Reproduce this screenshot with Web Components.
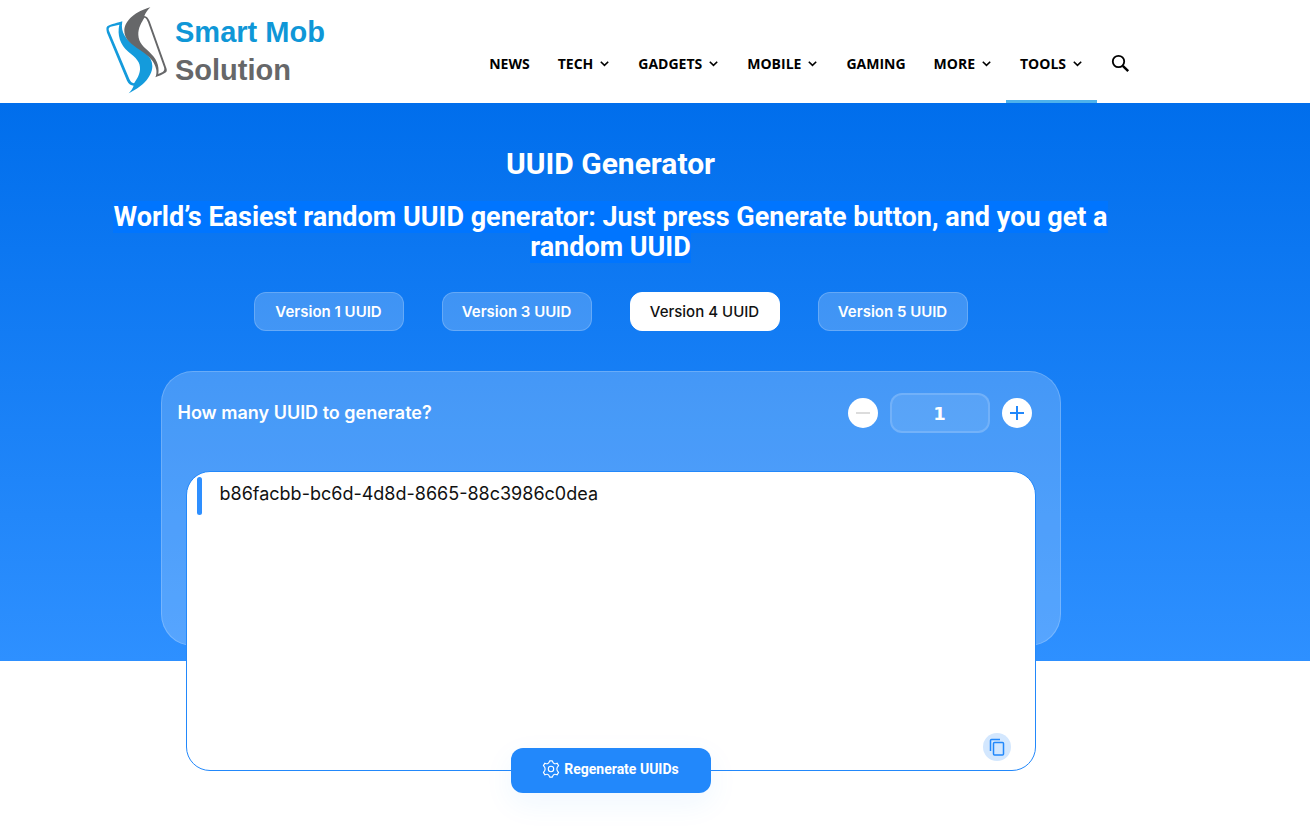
<!DOCTYPE html>
<html lang="en">
<head>
<meta charset="utf-8">
<meta name="viewport" content="width=device-width, initial-scale=1">
<title>UUID Generator - Smart Mob Solution</title>
<style>
  body {
    margin: 0;
    background-color: white;
    font-family: Roboto, sans-serif;
    --gutter-left: 102px;
    --gutter-right: 191px;
    --blue: #2288fb;
  }
</style>
</head>
<body>
<site-header>
  <site-logo slot="logo"></site-logo>
  <nav-item>News</nav-item>
  <nav-item menu>Tech</nav-item>
  <nav-item menu>Gadgets</nav-item>
  <nav-item menu>Mobile</nav-item>
  <nav-item>Gaming</nav-item>
  <nav-item menu>More</nav-item>
  <nav-item menu active>Tools</nav-item>
</site-header>
<uuid-hero>
  <span slot="title">UUID Generator</span>
  <span slot="subtitle">World’s Easiest random UUID generator: Just press Generate button, and you get a random UUID</span>
  <version-tab slot="tabs">Version 1 UUID</version-tab>
  <version-tab slot="tabs">Version 3 UUID</version-tab>
  <version-tab slot="tabs" active>Version 4 UUID</version-tab>
  <version-tab slot="tabs">Version 5 UUID</version-tab>
  <uuid-panel>b86facbb-bc6d-4d8d-8665-88c3986c0dea</uuid-panel>
</uuid-hero>

<script>
class SiteLogo extends HTMLElement {
  constructor() {
    super();
    this.attachShadow({mode: 'open'});
  }

  connectedCallback() {
    this.shadowRoot.innerHTML = `
    <style>
      :host {
        display: block;
      }

      a {
        display: flex;
        gap: 7px;
        color: #666769;
        text-decoration: none;
        font: bold 29px/38px "Liberation Sans", sans-serif;
      }

      .name {
        padding-top: 6px;
      }

      .name > span {
        display: block;
      }

      .name > span:first-child {
        color: #0f97d7;
      }
    </style>
    <a href="#">
      <svg width="62" height="87" viewBox="20 19 186 261" aria-hidden="true">
        <path fill="#149bdc" fill-rule="evenodd" d="M69 62 C58 66 34 70 24 77 C20 80 21 88 23 96 L83 240 C88 251 95 254 103 255 C100 263 95 271 88 278 C122 262 159 232 159 196 C159 167 133 151 109 136 C82 118 62 98 69 62 Z M60 72 C53 102 62 132 87 153 C110 172 124 183 122 207 C120 226 110 238 104 248 C97 247 93 242 90 235 L29 90 C27 84 28 80 34 78 Z"/>
        <path fill="#666769" fill-rule="evenodd" d="M153 20 C111 31 75 59 75 91 C75 117 97 131 122 148 C149 166 166 181 171 208 C172 216 171 224 168 230 C177 227 191 221 200 215 C203 212 203 207 201 202 L151 62 C147 52 142 47 135 46 C138 37 145 28 153 20 Z M135 51 C140 50 143 57 146 65 L194 200 C196 207 195 211 190 214 L177 220 C181 193 170 173 150 154 C133 138 118 127 117 103 C116 81 127 65 135 51 Z"/>
      </svg>
      <span class="name"><span>Smart Mob</span><span>Solution</span></span>
    </a>
    `;
  }
}

class NavItem extends HTMLElement {
  constructor() {
    super();
    this.attachShadow({mode: 'open'});
  }

  connectedCallback() {
    const arrow = this.hasAttribute('menu') ? `
      <svg width="9" height="6" viewBox="0 0 9 6" fill="none" stroke="currentColor" stroke-width="1.6" aria-hidden="true">
        <path d="M.8 .8l3.700 3.600L8.200 .8"/>
      </svg>` : '';

    this.shadowRoot.innerHTML = `
    <style>
      :host {
        display: flex;
      }

      a {
        display: flex;
        align-items: center;
        gap: 7px;
        box-sizing: border-box;
        padding: 27px 14px 0;
        border-bottom: 3px solid transparent;
        color: black;
        text-decoration: none;
        text-transform: uppercase;
        font: 700 14px/20px "Open Sans", sans-serif;
      }

      :host([menu]) a {
        padding-right: 15px;
      }

      :host([active]) a {
        border-bottom-color: #4db2ec;
      }
    </style>
    <a href="#"><slot></slot>${arrow}</a>
    `;
  }
}

class SiteHeader extends HTMLElement {
  constructor() {
    super();
    this.attachShadow({mode: 'open'});
  }

  connectedCallback() {
    this.shadowRoot.innerHTML = `
    <style>
      :host {
        display: block;
      }

      header {
        display: flex;
        justify-content: space-between;
        box-sizing: border-box;
        min-height: 103px;
        padding: 0 calc(var(--gutter-right) - 11px) 0 106px;
      }

      slot[name="logo"]::slotted(*) {
        padding-top: 7px;
      }

      nav {
        display: flex;
      }

      .search {
        align-self: center;
        margin: 23px 0 0 14px;
        padding: 0;
        border: 0;
        background: none;
        cursor: pointer;
      }

      .search svg {
        display: block;
      }
    </style>
    <header>
      <slot name="logo"></slot>
      <nav>
        <slot></slot>
        <button class="search" type="button" aria-label="Search">
          <svg width="19" height="19" viewBox="0 0 19 19" fill="none" stroke="black" aria-hidden="true">
            <circle cx="7.500" cy="7.500" r="5.700" stroke-width="1.800"/>
            <path d="M11.800 11.800l5.400 5.400" stroke-width="2.400"/>
          </svg>
        </button>
      </nav>
    </header>
    `;
  }
}

class VersionTab extends HTMLElement {
  constructor() {
    super();
    this.attachShadow({mode: 'open'});
  }

  connectedCallback() {
    this.shadowRoot.innerHTML = `
    <style>
      :host {
        display: block;
      }

      button {
        width: 150px;
        height: 39px;
        padding: 0;
        border: 1px solid rgba(255, 255, 255, 0.2);
        border-radius: 12px;
        background-color: rgba(255, 255, 255, 0.2);
        color: white;
        font: 600 15px/20px Inter, sans-serif;
        cursor: pointer;
      }

      :host([active]) button {
        border-color: white;
        background-color: white;
        color: #111;
        font-weight: 500;
      }
    </style>
    <button type="button"><slot></slot></button>
    `;
  }
}

class UuidPanel extends HTMLElement {
  constructor() {
    super();
    this.attachShadow({mode: 'open'});
  }

  connectedCallback() {
    this.render();
  }

  render() {
    this.shadowRoot.innerHTML = `
    <style>
      /* the result card hangs out of the bottom of the panel */
      :host {
        display: block;
        max-width: 900px;
        height: 275px;
        margin: 40px auto 0;
        box-sizing: border-box;
        border: 1px solid rgba(255, 255, 255, 0.2);
        border-radius: 32px;
        background-color: rgba(255, 255, 255, 0.2);
      }

      .amount {
        display: flex;
        align-items: center;
        gap: 12px;
        padding: 21px 28px 0 16px;
        color: white;
        font: 600 18px/24px Inter, sans-serif;
      }

      label {
        margin-right: auto;
      }

      .round {
        display: grid;
        place-items: center;
        width: 30px;
        height: 30px;
        padding: 0;
        border: 0;
        border-radius: 50%;
        background-color: white;
        color: var(--blue);
        cursor: pointer;
      }

      .round:disabled {
        color: #dcdcdc;
      }

      input {
        box-sizing: border-box;
        width: 100px;
        height: 40px;
        padding: 0;
        border: 2px solid rgba(255, 255, 255, 0.15);
        border-radius: 12px;
        background-color: rgba(255, 255, 255, 0.1);
        color: white;
        text-align: center;
        font: bold 18px/24px "DejaVu Sans", sans-serif;
      }

      .result {
        display: flex;
        flex-direction: column;
        box-sizing: border-box;
        min-height: 300px;
        margin: 38px 24px 0;
        padding: 5px 24px 9px 10px;
        border: 1px solid var(--blue);
        border-radius: 24px;
        background-color: white;
      }

      .uuid {
        display: flex;
        gap: 18px;
        color: #111;
        text-align: left;
        font: 400 18px/24px Inter, sans-serif;
      }

      .uuid::before {
        content: "";
        width: 5px;
        border-radius: 3px;
        background-color: #2e8fff;
      }

      .uuid span {
        padding: 5px 0 9px;
      }

      .copy {
        align-self: flex-end;
        margin-top: auto;
        width: 28px;
        height: 28px;
        background-color: #d3e7fe;
      }

      .regenerate {
        position: relative;
        display: flex;
        align-items: center;
        justify-content: center;
        gap: 4px;
        width: 200px;
        height: 45px;
        margin: -23px auto 0;
        padding: 0 0 3px;
        border: 0;
        border-radius: 12px;
        background-color: var(--blue);
        box-shadow: 0 10px 30px rgba(34, 136, 251, 0.07);
        color: white;
        font: 700 14px/20px Roboto, sans-serif;
        cursor: pointer;
      }
    </style>
    <div class="amount">
      <label for="amount">How many UUID to generate?</label>
      <button class="round" type="button" aria-label="Fewer" disabled>
        <svg width="14" height="14" viewBox="0 0 14 14" stroke="currentColor" stroke-width="2"><path d="M0 7h14"/></svg>
      </button>
      <input id="amount" type="text" inputmode="numeric" value="1">
      <button class="round" type="button" aria-label="More">
        <svg width="14" height="14" viewBox="0 0 14 14" stroke="currentColor" stroke-width="2"><path d="M0 7h14M7 0v14"/></svg>
      </button>
    </div>
    <div class="result">
      <div class="uuid"><span><slot></slot></span></div>
      <button class="round copy" type="button" aria-label="Copy">
        <svg width="16" height="18" viewBox="0 0 16 18" fill="none" stroke="currentColor" stroke-width="1.500">
          <rect x="4.500" y="4.500" width="10" height="12.500" rx="1"/>
          <path d="M1.500 13V2.500Q1.500 1.500 2.500 1.500H11"/>
        </svg>
      </button>
    </div>
    <button class="regenerate" type="button">
      <svg width="18" height="18" viewBox="0 0 24 24" fill="none" stroke="currentColor" stroke-width="1.500" stroke-linejoin="round" aria-hidden="true">
        <circle cx="12" cy="12" r="3.600"/>
        <path d="M10.200 1.200h3.600q.8 2.800 2.300 3.500t4-.5l2 3.300q-2.300 2.200-2.300 4.500t2.300 4.500l-2 3.300q-2.500-1.200-4-.5t-2.300 3.500h-3.600q-.8-2.800-2.300-3.500t-4 .5l-2-3.300q2.300-2.200 2.300-4.500T1.900 7.500l2-3.300q2.500 1.200 4 .5t2.300-3.500z"/>
      </svg>
      Regenerate UUIDs
    </button>
    `;

    const [less, more] = this.shadowRoot.querySelectorAll('.amount .round');
    const input = this.shadowRoot.querySelector('input');
    const step = (by) => {
      input.value = Math.max(1, Number(input.value) + by);
      less.disabled = Number(input.value) === 1;
    };
    less.addEventListener('click', () => step(-1));
    more.addEventListener('click', () => step(1));
    this.shadowRoot.querySelector('.copy').addEventListener('click', () => {
      navigator.clipboard.writeText(this.textContent.trim());
    });
    this.shadowRoot.querySelector('.regenerate').addEventListener('click', () => {
      this.textContent = crypto.randomUUID();
    });
  }
}

class UuidHero extends HTMLElement {
  constructor() {
    super();
    this.attachShadow({mode: 'open'});
  }

  connectedCallback() {
    this.shadowRoot.innerHTML = `
    <style>
      :host {
        --overhang: 165px;
        display: block;
        padding: 45px var(--gutter-right) calc(var(--overhang) + 15px) var(--gutter-left);
        background: linear-gradient(#006eec, #2e90ff) top / 100% calc(100% - var(--overhang)) no-repeat;
        color: white;
        text-align: center;
      }

      h1 {
        margin: 0;
        font: bold 30px/32px Roboto, sans-serif;
      }

      h2 {
        margin: 22px 0 0;
        font: bold 27px/30px Roboto, sans-serif;
      }

      h2 slot::slotted(*) {
        background-color: #0075ff;
      }

      .tabs {
        display: flex;
        flex-wrap: wrap;
        justify-content: center;
        gap: 38px;
        margin-top: 30px;
      }
    </style>
    <h1><slot name="title"></slot></h1>
    <h2><slot name="subtitle"></slot></h2>
    <div class="tabs"><slot name="tabs"></slot></div>
    <slot></slot>
    `;
  }
}

customElements.define('site-logo', SiteLogo);
customElements.define('nav-item', NavItem);
customElements.define('site-header', SiteHeader);
customElements.define('version-tab', VersionTab);
customElements.define('uuid-panel', UuidPanel);
customElements.define('uuid-hero', UuidHero);
</script>
</body>
</html>
